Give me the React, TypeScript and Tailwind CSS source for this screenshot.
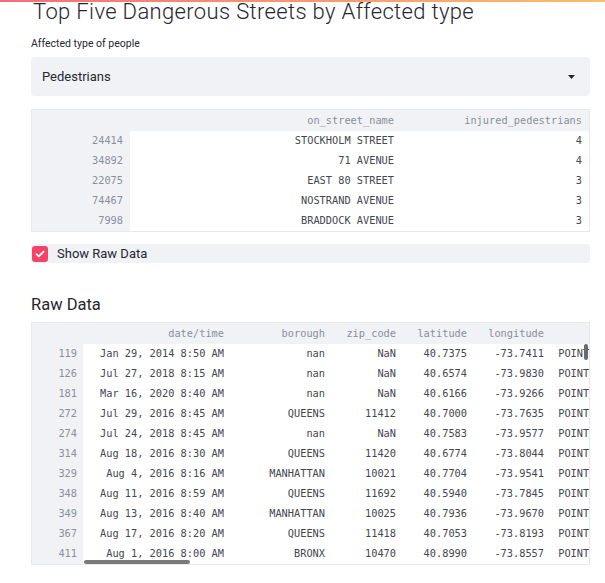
import React from "react";

const sans = "font-['Roboto','Liberation_Sans',sans-serif]";
const mono = "font-['DejaVu_Sans_Mono','Liberation_Mono',monospace]";

const streets = [
  { idx: "24414", name: "STOCKHOLM STREET", n: 4 },
  { idx: "34892", name: "71 AVENUE", n: 4 },
  { idx: "22075", name: "EAST 80 STREET", n: 3 },
  { idx: "74467", name: "NOSTRAND AVENUE", n: 3 },
  { idx: "7998", name: "BRADDOCK AVENUE", n: 3 },
];

const raw = [
  ["119", "Jan 29, 2014 8:50 AM", "nan", "NaN", "40.7375", "-73.7411"],
  ["126", "Jul 27, 2018 8:15 AM", "nan", "NaN", "40.6574", "-73.9830"],
  ["181", "Mar 16, 2020 8:40 AM", "nan", "NaN", "40.6166", "-73.9266"],
  ["272", "Jul 29, 2016 8:45 AM", "QUEENS", "11412", "40.7000", "-73.7635"],
  ["274", "Jul 24, 2018 8:45 AM", "nan", "NaN", "40.7583", "-73.9577"],
  ["314", "Aug 18, 2016 8:30 AM", "QUEENS", "11420", "40.6774", "-73.8044"],
  ["329", "Aug 4, 2016 8:16 AM", "MANHATTAN", "10021", "40.7704", "-73.9541"],
  ["348", "Aug 11, 2016 8:59 AM", "QUEENS", "11692", "40.5940", "-73.7845"],
  ["349", "Aug 13, 2016 8:40 AM", "MANHATTAN", "10025", "40.7936", "-73.9670"],
  ["367", "Aug 17, 2016 8:20 AM", "QUEENS", "11418", "40.7053", "-73.8193"],
  ["411", "Aug 1, 2016 8:00 AM", "BRONX", "10470", "40.8990", "-73.8557"],
];

export default function App() {
  return (
    <div className={`relative min-h-[583px] bg-white overflow-hidden text-[#262730] ${sans}`}>
      {/* top decoration */}
      <div className="absolute top-0 left-0 right-0 h-[2px] bg-gradient-to-r from-[#f46d75] to-[#f9bd6c] z-10" />

      <div className="pl-[31px] pr-[15px]">
        <h1 className="pl-[2px] text-[22px] leading-[24px] font-light tracking-[0.35px] whitespace-nowrap">
          Top Five Dangerous Streets by Affected type
        </h1>

        <div className="mt-[14px] text-[10.5px] leading-[12px]">Affected type of people</div>

        {/* select */}
        <div className="mt-[7px] h-[39px] rounded-[4px] bg-[#f0f2f6] flex items-center pl-[11px] pr-[15px]">
          <span className="text-[13px]">Pedestrians</span>
          <svg className="ml-auto" width="7" height="4" viewBox="0 0 7 4">
            <path d="M0 0h7L3.5 4z" fill="#262730" />
          </svg>
        </div>

        {/* top streets table */}
        <div className={`mt-[13px] border border-[#e6e9ef] text-[10.3px] ${mono}`}>
          <div className="flex h-[21px] items-center bg-[#f0f2f6] text-[#8b8f9b]">
            <div className="w-[98px]" />
            <div className="w-[272px] text-right pr-[8px]">on_street_name</div>
            <div className="flex-1 text-right pr-[7px]">injured_pedestrians</div>
          </div>
          {streets.map((s) => (
            <div key={s.idx} className="flex h-[20px] items-center">
              <div className="w-[98px] h-full flex items-center justify-end pr-[7px] bg-[#f0f2f6] text-[#8b8f9b]">{s.idx}</div>
              <div className="w-[272px] text-right pr-[8px] text-[#45474f]">{s.name}</div>
              <div className="flex-1 text-right pr-[7px] text-[#45474f]">{s.n}</div>
            </div>
          ))}
        </div>

        {/* checkbox */}
        <div className="mt-[12px] h-[19px] rounded-[3px] bg-[#f0f2f6] flex items-center pl-[1px]">
          <div className="w-[16px] h-[16px] rounded-[3px] bg-[#f5436a] flex items-center justify-center">
            <svg width="10" height="8" viewBox="0 0 10 8">
              <path d="M1.5 4.2l2.3 2.2L8.5 1.6" stroke="white" strokeWidth="1.8" fill="none" strokeLinecap="round" strokeLinejoin="round" />
            </svg>
          </div>
          <span className="ml-[9px] text-[13px] leading-[19px]">Show Raw Data</span>
        </div>

        <h3 className="mt-[34px] text-[16.5px] leading-[16px] font-normal">Raw Data</h3>

        {/* raw data table */}
        <div className={`relative mt-[9px] border border-[#e6e9ef] overflow-hidden text-[10.3px] ${mono}`}>
          <div className="w-[760px]">
            <div className="flex h-[21px] items-center bg-[#f0f2f6] text-[#8b8f9b]">
              <div className="w-[51px] shrink-0" />
              <div className="w-[149px] shrink-0 text-right pr-[8px]">date/time</div>
              <div className="w-[101px] shrink-0 text-right pr-[8px]">borough</div>
              <div className="w-[71px] shrink-0 text-right pr-[8px]">zip_code</div>
              <div className="w-[71px] shrink-0 text-right pr-[8px]">latitude</div>
              <div className="w-[77px] shrink-0 text-right pr-[8px]">longitude</div>
              <div className="w-[163px] shrink-0 text-right pr-[8px]">geometry</div>
            </div>
            {raw.map((r) => (
              <div key={r[0]} className="flex h-[20px] items-center text-[#45474f]">
                <div className="w-[51px] shrink-0 h-full flex items-center justify-end pr-[6px] bg-[#f0f2f6] text-[#8b8f9b]">{r[0]}</div>
                <div className="w-[149px] shrink-0 text-right pr-[8px]">{r[1]}</div>
                <div className="w-[101px] shrink-0 text-right pr-[8px]">{r[2]}</div>
                <div className="w-[71px] shrink-0 text-right pr-[8px]">{r[3]}</div>
                <div className="w-[71px] shrink-0 text-right pr-[8px]">{r[4]}</div>
                <div className="w-[77px] shrink-0 text-right pr-[8px]">{r[5]}</div>
                <div className="w-[163px] shrink-0 text-right pr-[8px] whitespace-nowrap">{`POINT (${r[5]} ${r[4]})`}</div>
              </div>
            ))}
          </div>
          {/* scrollbars */}
          <div className="absolute right-[1px] top-[21px] w-[4px] h-[16px] rounded-full bg-[#6b6b6b]" />
          <div className="absolute left-[52px] bottom-[0px] w-[106px] h-[4px] rounded-full bg-[#7a7a7a]" />
        </div>
      </div>
    </div>
  );
}
